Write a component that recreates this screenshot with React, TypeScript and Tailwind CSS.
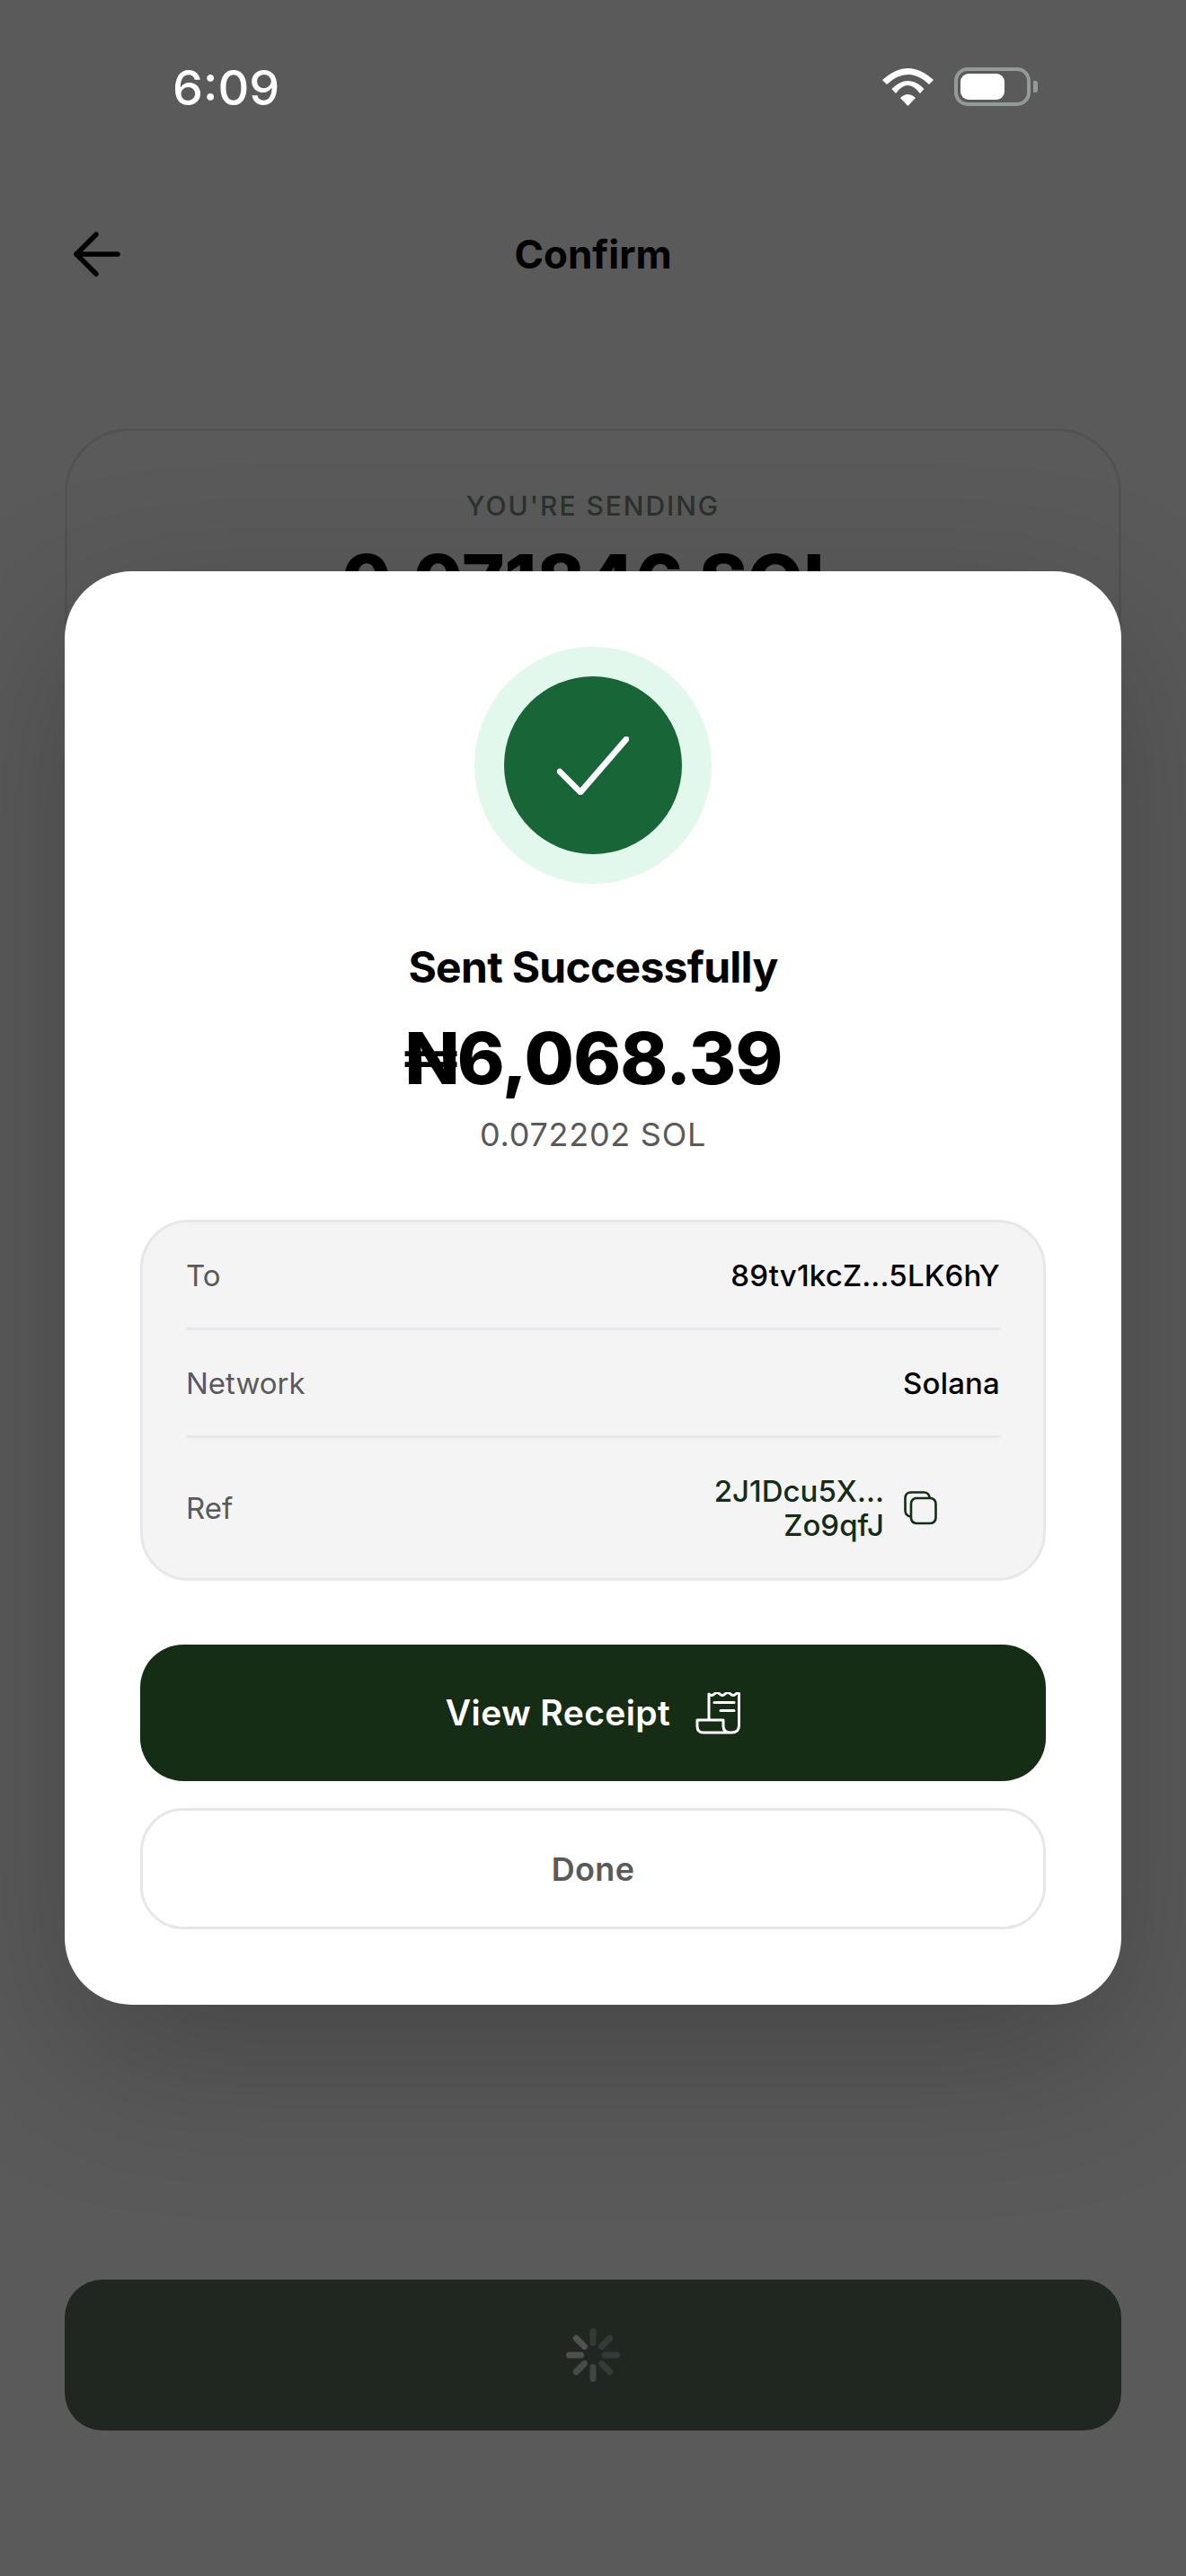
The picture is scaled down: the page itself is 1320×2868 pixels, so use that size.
const font = "font-['Inter',sans-serif]";

const WifiIcon = () => (
    <svg width="57" height="42" viewBox="0 0 57 42" fill="#ffffff">
        <path d="M0 13 Q28.5 -13 57 13 L52 18 Q28.5 -4 5 18 Z" />
        <path d="M10.5 23 Q28.5 5 46.5 23 L42 28 Q28.5 10 15 28 Z" />
        <path d="M20 33 Q28.5 25 37 33 L28.5 42 Z" />
    </svg>
);

const BatteryIcon = () => (
    <div className="flex items-center gap-[3px]">
        <div className="flex h-[43px] w-[85px] items-center rounded-[15px] border-[4px] border-[#949a98] pl-[3px]">
            <div className="h-[29px] w-[49px] rounded-[9px] bg-white" />
        </div>
        <div className="h-[13px] w-[5px] rounded-r-[3px] bg-[#949a98]" />
    </div>
);

const BackArrow = () => (
    <svg width="52" height="50" viewBox="0 0 52 50" fill="none" stroke="#000000" strokeWidth="5.5" strokeLinecap="round" strokeLinejoin="round">
        <path d="M25 3 L3 25 L25 47" />
        <path d="M3 25 H49" />
    </svg>
);

const CheckIcon = () => (
    <svg width="80" height="65" viewBox="0 0 80 65" fill="none" stroke="#ffffff" strokeWidth="6.5" strokeLinecap="round" strokeLinejoin="round">
        <path d="M3 39 L26 62 L77 3" />
    </svg>
);

const CopyIcon = () => (
    <svg width="37" height="38" viewBox="0 0 37 38" fill="none" stroke="#152c15" strokeWidth="2.6">
        <rect x="8" y="8" width="27.5" height="28" rx="6" />
        <path d="M8 28.5 C3.5 28 1.5 25.5 1.5 21.5 V8 C1.5 4 4 1.5 8 1.5 H22 C26 1.5 28.5 4 28.5 8" />
    </svg>
);

const ReceiptIcon = () => (
    <svg width="50" height="47" viewBox="0 0 50 47" fill="none" stroke="#ffffff" strokeWidth="3" strokeLinecap="round" strokeLinejoin="round">
        <path d="M15 31 V2 Q18 5 21 2 T27 2 T33 2 T39 2 T45 2 T48.5 2 V37 Q48.5 45 40 45 H9 Q2 45 2 38 V31 H31 V38 Q31 45 40 45" />
        <path d="M21 11.5 H43" />
        <path d="M28 20.5 H43" />
    </svg>
);

const spokes = [
    { angle: 0, color: '#343a36' },
    { angle: 45, color: '#343a36' },
    { angle: 90, color: '#343a36' },
    { angle: 135, color: '#363b38' },
    { angle: 180, color: '#414543' },
    { angle: 225, color: '#494b4a' },
    { angle: 270, color: '#4f4f4f' },
    { angle: 315, color: '#505250' },
];

const Spinner = () => (
    <svg width="60" height="60" viewBox="0 0 60 60">
        {spokes.map((s) => (
            <rect key={s.angle} x="26.5" y="0" width="7" height="20" rx="3.5" fill={s.color} transform={`rotate(${s.angle} 30 30)`} />
        ))}
    </svg>
);

const Row = ({ label, value }: { label: string; value: string }) => (
    <div className="flex items-center justify-between border-b-[3px] border-[#e5e7eb] py-[37.5px]">
        <span className="text-[33px] leading-[42px] text-[#5a5a5a]">{label}</span>
        <span className="text-[33px] font-medium leading-[42px] tracking-[0.005em] text-black">{value}</span>
    </div>
);

export default function App() {
    return (
        <div className={`relative h-[2868px] w-[1320px] overflow-hidden bg-[#5a5a5a] ${font}`}>
            {/* screen underneath the dimmed overlay */}
            <div className="flex h-full flex-col px-[72px]">
                <div className="flex h-[118px] items-end justify-between pl-[120px] pr-[93px] pt-[72px]">
                    <span className="text-[54px] font-medium leading-[40px] text-white">6:09</span>
                    <div className="flex items-center gap-[23px]">
                        <WifiIcon />
                        <BatteryIcon />
                    </div>
                </div>

                <div className="relative mt-[107px] flex h-[116px] items-center justify-center">
                    <div className="absolute left-[10px] top-[33px]">
                        <BackArrow />
                    </div>
                    <h1 className="text-[44px] font-bold text-black">Confirm</h1>
                </div>

                <div className="mt-[136px] flex h-[1000px] flex-col items-center rounded-[72px] border-[3px] border-[#525252] pt-[62px]">
                    <p className="text-[30px] font-medium leading-[42px] tracking-[0.065em] text-[#2c312c]">YOU'RE SENDING</p>
                    <p className="mt-[13px] text-[81px] font-extrabold leading-[100px] text-black">0.071846 SOL</p>
                </div>

                <div className="mt-auto mb-[162px] flex h-[168px] items-center justify-center rounded-[42px] bg-[#202620]">
                    <Spinner />
                </div>
            </div>

            {/* success modal */}
            <div className="absolute left-[72px] top-[636px] flex h-[1596px] w-[1176px] flex-col items-center rounded-[75px] bg-white px-[84px] pt-[84px] shadow-[0_60px_180px_rgba(0,0,0,0.22)]">
                <div className="flex h-[264px] w-[264px] items-center justify-center rounded-full bg-[#e3f8ec]">
                    <div className="flex h-[198px] w-[198px] items-center justify-center rounded-full bg-[#186637]">
                        <CheckIcon />
                    </div>
                </div>

                <h2 className="mt-[62px] text-[48px] font-bold leading-[62px] tracking-[-0.015em] text-black">Sent Successfully</h2>
                <p className="mt-[20px] text-[80px] font-extrabold leading-[100px] tracking-[-0.01em] text-black">₦6,068.39</p>
                <p className="mt-[12px] text-[36px] leading-[46px] tracking-[0.02em] text-[#5a5a5a]">0.072202 SOL</p>

                <div className="mt-[72px] w-full rounded-[54px] border-[3px] border-[#e5e7eb] bg-[#f4f4f4] px-[48px]">
                    <Row label="To" value="89tv1kcZ...5LK6hY" />
                    <Row label="Network" value="Solana" />
                    <div className="flex items-center justify-between py-[40px]">
                        <span className="text-[33px] leading-[38px] text-[#5a5a5a]">Ref</span>
                        <div className="flex items-center gap-[22px] pr-[70px]">
                            <span className="text-right text-[33px] font-medium leading-[38px] text-[#152c15]">
                                2J1Dcu5X...
                                <br />
                                Zo9qfJ
                            </span>
                            <CopyIcon />
                        </div>
                    </div>
                </div>

                <button className="mt-[71px] flex h-[152px] w-full items-center justify-center gap-[28px] rounded-[48px] bg-[#152c15]">
                    <span className="text-[39px] font-semibold tracking-[0.01em] text-white">View Receipt</span>
                    <ReceiptIcon />
                </button>
                <button className="mt-[30px] flex h-[135px] w-full items-center justify-center rounded-[48px] border-[3px] border-[#e5e7eb] bg-white">
                    <span className="text-[36px] font-semibold tracking-[0.01em] text-[#5a5a5a]">Done</span>
                </button>
            </div>
        </div>
    );
}
